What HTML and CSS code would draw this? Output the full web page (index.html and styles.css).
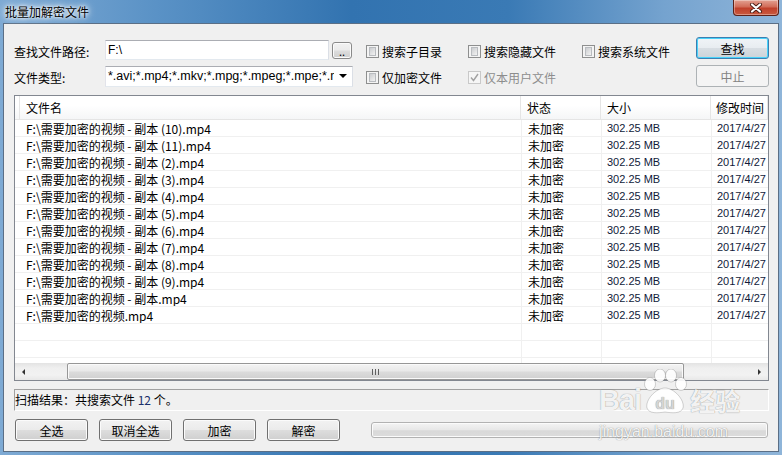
FILE: index.html
```html
<!DOCTYPE html>
<html lang="zh-CN">
<head>
    <meta charset="UTF-8">
    <title>批量加解密文件</title>
    <link rel="stylesheet" href="styles.css">
</head>
<body>
    <div class="window">
        <div class="titlebar">
            <span class="title">批量加解密文件</span>
            <div class="close-btn">
                <svg width="14" height="10" viewBox="0 0 14 10">
                    <path d="M3 1.5 L11 8.5 M11 1.5 L3 8.5" stroke="#4a1c14" stroke-width="4" stroke-linecap="round"/>
                    <path d="M3 1.5 L11 8.5 M11 1.5 L3 8.5" stroke="#fff" stroke-width="2.2" stroke-linecap="round"/>
                </svg>
            </div>
        </div>

        <div class="client">
            <div class="search-panel">
                <div class="search-fields">
                    <label class="field-label">查找文件路径:</label>
                    <div class="path-field">
                        <div class="textbox">F:\</div>
                        <button class="btn btn-browse">..</button>
                    </div>
                    <label class="check"><span class="box"></span>搜索子目录</label>
                    <label class="check"><span class="box"></span>搜索隐藏文件</label>
                    <label class="check"><span class="box"></span>搜索系统文件</label>

                    <label class="field-label">文件类型:</label>
                    <div class="combo">
                        <span class="combo-text">*.avi;*.mp4;*.mkv;*.mpg;*.mpeg;*.mpe;*.m</span>
                        <span class="combo-arrow"></span>
                    </div>
                    <label class="check"><span class="box"></span>仅加密文件</label>
                    <label class="check disabled">
                        <span class="box checked">
                            <svg width="9" height="9" viewBox="0 0 9 9"><path d="M1 4.5 L3.5 7.5 L8 1" fill="none" stroke="#a2a2a2" stroke-width="1.4"/></svg>
                        </span>仅本用户文件
                    </label>
                </div>
                <div class="search-actions">
                    <button class="btn btn-action focused">查找</button>
                    <button class="btn btn-action" disabled>中止</button>
                </div>
            </div>

            <div class="listview">
                <div class="lv-header">
                    <div class="lv-col"></div>
                    <div class="lv-col">文件名</div>
                    <div class="lv-col">状态</div>
                    <div class="lv-col">大小</div>
                    <div class="lv-col">修改时间</div>
                </div>
                <div class="lv-body" id="lvBody"></div>
                <div class="hscroll">
                    <span class="sb-arrow sb-left"></span>
                    <span class="sb-track sb-before"></span>
                    <span class="sb-thumb"><span class="sb-grip"></span></span>
                    <span class="sb-track sb-after"></span>
                    <span class="sb-arrow sb-right"></span>
                </div>
            </div>

            <div class="status-box">扫描结果：共搜索文件 <span class="num">12</span> 个。</div>

            <div class="bottom-bar">
                <button class="btn btn-cmd">全选</button>
                <button class="btn btn-cmd">取消全选</button>
                <button class="btn btn-cmd">加密</button>
                <button class="btn btn-cmd">解密</button>
                <div class="progress"></div>
            </div>
        </div>

        <div class="watermark">
            <div class="wm-logo">
                <span class="wm-bai">Bai</span>
                <svg class="wm-paw" width="48" height="46" viewBox="0 0 48 46">
                    <ellipse cx="9" cy="15" rx="5.5" ry="6.5"/>
                    <ellipse cx="19" cy="6.5" rx="5.5" ry="6.5"/>
                    <ellipse cx="30" cy="6.5" rx="5.5" ry="6.5"/>
                    <ellipse cx="40" cy="15" rx="5.5" ry="6.5"/>
                    <path d="M24 19 C33 19 44 31 42 39 C40 45 31 44 24 43 C17 44 8 45 6 39 C4 31 15 19 24 19 Z"/>
                    <text x="24" y="40" text-anchor="middle" class="wm-du">du</text>
                </svg>
                <span class="wm-jy">经验</span>
            </div>
            <div class="wm-url">jingyan.baidu.com</div>
        </div>
    </div>

    <script>
        const files = [
            '需要加密的视频 - 副本 (10).mp4',
            '需要加密的视频 - 副本 (11).mp4',
            '需要加密的视频 - 副本 (2).mp4',
            '需要加密的视频 - 副本 (3).mp4',
            '需要加密的视频 - 副本 (4).mp4',
            '需要加密的视频 - 副本 (5).mp4',
            '需要加密的视频 - 副本 (6).mp4',
            '需要加密的视频 - 副本 (7).mp4',
            '需要加密的视频 - 副本 (8).mp4',
            '需要加密的视频 - 副本 (9).mp4',
            '需要加密的视频 - 副本.mp4',
            '需要加密的视频.mp4'
        ];

        const lvBody = document.getElementById('lvBody');

        function addRow(cells) {
            const row = document.createElement('div');
            row.className = 'lv-row';
            row.innerHTML = cells.map((c, i) => `<div class="lv-cell c${i}">${c}</div>`).join('');
            lvBody.appendChild(row);
        }

        files.forEach(name => addRow(['', 'F:\\' + name, '未加密', '302.25 MB', '2017/4/27']));
        for (let i = 0; i < 3; i++) addRow(['', '', '', '', '']);
    </script>
</body>
</html>
```

FILE: styles.css
```css
* { margin: 0; padding: 0; box-sizing: border-box; }
body { width: 782px; height: 455px; overflow: hidden; font-family: "Noto Sans CJK SC", "Liberation Sans", sans-serif; font-size: 12px; color: #000; }

.window { position: relative; width: 782px; height: 455px; display: flex; flex-direction: column; padding: 0 3px 3px 3px;
    background: linear-gradient(to right, #7eaad4 0%, #5a92c6 20%, #3273b0 45%, #3a7ab5 65%, #75a3cf 85%, #8fb5d9 100%); }

/* title bar */
.titlebar { height: 23px; position: relative; padding: 3px 0 0 2px; }
.title { font-size: 12px; line-height: 16px; text-shadow: 0 0 6px #fff, 0 0 3px #fff, 0 0 10px #fff; }
.close-btn { position: absolute; top: 0; right: 0; width: 46px; height: 16px; display: flex; align-items: center; justify-content: center;
    border: 1px solid #5d2118; border-top: none; border-radius: 0 0 4px 4px;
    background: linear-gradient(#e3a192 0%, #d26c58 45%, #c0402b 55%, #c95a3f 100%); box-shadow: inset 0 0 0 1px rgba(255,255,255,0.35); }

/* client */
.client { flex: 1; display: flex; flex-direction: column; background: #f0f0f0; border: 1px solid #5b6f86; padding: 13px 9px 0 10px; }

.search-panel { display: flex; justify-content: space-between; height: 50px; }
.search-fields { display: grid; grid-template-columns: 91px 261px 102px 114px auto; grid-auto-rows: 22px; row-gap: 4px; padding-top: 2px; align-items: center; }
.field-label { white-space: nowrap; padding-top: 3px; }
.path-field { display: flex; align-items: center; }
.textbox { width: 224px; height: 20px; background: #fff; border: 1px solid; border-color: #abadb3 #dbdfe6 #e3e9ef #e2e3ea; padding-left: 2px; line-height: 18px; font-family: "Liberation Sans", sans-serif; }
.combo { width: 248px; height: 21px; display: flex; align-items: center; background: #fff; border: 1px solid; border-color: #abadb3 #dbdfe6 #e3e9ef #e2e3ea; overflow: hidden; }
.combo-text { flex: 1; min-width: 0; overflow: hidden; white-space: nowrap; padding-left: 2px; font-family: "Liberation Sans", sans-serif; font-size: 12.5px; line-height: 19px; }
.combo-arrow { width: 18px; flex-shrink: 0; display: flex; justify-content: center; }
.combo-arrow::after { content: ""; border-top: 4px solid #000; border-left: 4px solid transparent; border-right: 4px solid transparent; }

.check { display: flex; align-items: center; gap: 3px; white-space: nowrap; padding-top: 3px; }
.check .box { width: 13px; height: 13px; flex-shrink: 0; border: 1px solid #8e8f8f; background: #f4f4f4; padding: 2px; display: flex; align-items: center; justify-content: center; }
.check .box::before { content: ""; width: 100%; height: 100%; background: linear-gradient(135deg, #cbcdd0, #f2f2f2); border: 1px solid #b9bcc0; }
.check .box.checked { border-color: #c9c9c9; padding: 0; background: #f6f6f6; }
.check .box.checked::before { display: none; }
.check.disabled { color: #8d8d8d; }

/* buttons */
.btn { height: 22px; font: inherit; color: #000; border: 1px solid #707070; border-radius: 3px; box-shadow: inset 0 0 0 1px #fbfbfb;
    background: linear-gradient(#f2f2f2 0%, #ebebeb 48%, #dddddd 52%, #cfcfcf 100%); }
.btn-browse { width: 20px; height: 17px; margin-left: 3px; font-size: 11px; line-height: 12px; padding-top: 2px; border-color: #8a8a8a; }
.search-actions { display: flex; flex-direction: column; gap: 6px; }
.btn-action { width: 73px; }
.btn.focused { border-color: #3c7fb1; box-shadow: inset 0 0 0 1px #48d2fa; background: linear-gradient(#f0f4f7 0%, #e8edf1 48%, #d8dee3 52%, #ccd3d9 100%); }
.btn:disabled { border-color: #adb2b5; background: #f4f4f4; color: #838383; box-shadow: none; }

/* list view */
.listview { margin-top: 8px; height: 286px; display: flex; flex-direction: column; background: #fff; border: 1px solid #828790; overflow: hidden; }
.lv-header, .lv-row { display: grid; grid-template-columns: 5px 501px 80px 110px 1fr; }
.lv-header { height: 24px; flex-shrink: 0; background: linear-gradient(#fff 0%, #fff 40%, #f5f6f7 100%); border-bottom: 1px solid #e5e5e5; }
.lv-col { padding-left: 6px; line-height: 23px; border-right: 1px solid #e5e5e5; white-space: nowrap; }
.lv-col:first-child { padding: 0; }
.lv-col:nth-child(5) { padding-left: 5px; }
.lv-body { flex: 1; overflow: hidden; }
.lv-row { height: 17px; border-bottom: 1px solid #f0f0f0; }
.lv-cell { padding-left: 6px; line-height: 17px; white-space: nowrap; overflow: hidden; }
.lv-cell.c0 { padding: 0; }
.lv-cell.c2, .lv-cell.c3, .lv-cell.c4 { border-left: 1px solid #f0f0f0; }
.lv-cell.c3, .lv-cell.c4 { font-family: "Liberation Sans", sans-serif; font-size: 11px; color: #101a3a; padding-left: 5px; }

.hscroll { height: 17px; flex-shrink: 0; display: flex; background: linear-gradient(#e3e3e3, #efefef 30%, #f2f2f2 70%, #e8e8e8); }
.sb-arrow { width: 17px; display: flex; align-items: center; justify-content: center; }
.sb-left::after { content: ""; border-right: 3px solid #333; border-top: 3.5px solid transparent; border-bottom: 3.5px solid transparent; }
.sb-right::after { content: ""; border-left: 3px solid #333; border-top: 3.5px solid transparent; border-bottom: 3.5px solid transparent; }
.sb-before { width: 35px; }
.sb-thumb { width: 617px; display: flex; align-items: center; justify-content: center; border: 1px solid #979797; border-radius: 2px;
    background: linear-gradient(#f4f4f4 0%, #e9e9e9 45%, #dbdbdb 55%, #d0d0d0 100%); box-shadow: inset 0 0 0 1px #fafafa; }
.sb-grip { width: 7px; height: 6px; background: repeating-linear-gradient(to right, #606060 0 1px, transparent 1px 3px); }
.sb-after { flex: 1; }

/* status + bottom */
.status-box { margin-top: 8px; height: 22px; border: 1px solid; border-color: #a0a0a0 #fff #fff #a0a0a0; line-height: 20px; white-space: nowrap; }
.status-box .num { color: #1a2f6a; }
.bottom-bar { margin-top: 8px; height: 22px; display: flex; align-items: center; gap: 11px; padding: 0 1px 0 1px; }
.btn-cmd { width: 73px; }
.progress { flex: 1; height: 16px; margin-left: 20px; border: 1px solid #b2b2b2; border-radius: 3px;
    background: linear-gradient(#f4f4f4 0%, #e7e7e7 50%, #d9d9d9 55%, #dcdcdc 100%); box-shadow: inset 0 0 0 1px #fbfbfb; }

/* watermark */
.watermark { position: absolute; left: 599px; top: 369px; color: rgba(255,255,255,0.92); text-shadow: 0 0 1px rgba(0,0,0,0.5); pointer-events: none; }
.wm-logo { display: flex; align-items: flex-end; height: 46px; }
.wm-bai { font-family: "Liberation Sans", sans-serif; font-weight: bold; font-size: 29px; line-height: 29px; letter-spacing: -1px; }
.wm-paw { margin-left: 0; fill: rgba(255,255,255,0.9); stroke: rgba(0,0,0,0.28); stroke-width: 0.6; }
.wm-du { font-family: "Liberation Sans", sans-serif; font-weight: bold; font-size: 16px; fill: #d5d5d5; stroke: none; }
.wm-jy { font-size: 25px; line-height: 29px; font-weight: bold; margin-left: 1px; }
.wm-url { font-family: "Liberation Sans", sans-serif; font-size: 16px; margin-top: 8px; }
```
